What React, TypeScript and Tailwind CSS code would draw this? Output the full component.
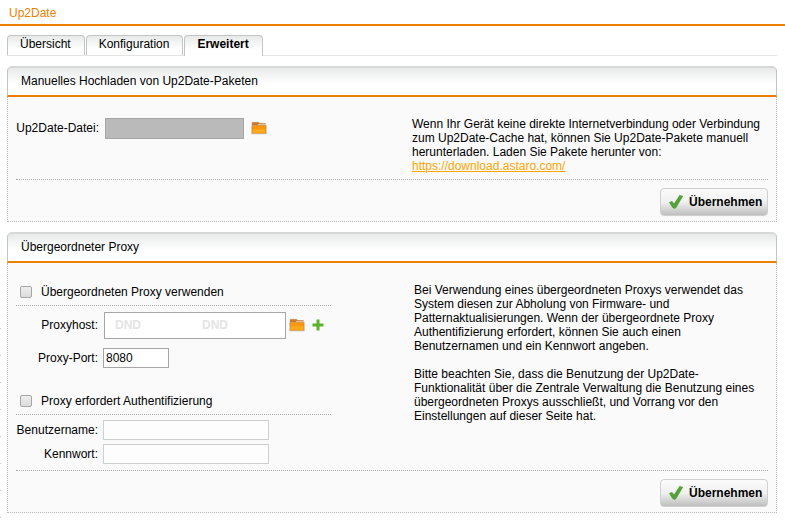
import { useState, type ReactNode } from 'react';

const inputClass = 'h-5 border px-0.5 outline-none';

function FolderIcon() {
  return (
    <svg width="17" height="14" viewBox="0 0 17 14" aria-hidden="true">
      <path d="M0.5 4V1.5L1.5 0.8H7.5L9 2H15V4Z" fill="#dcdce0" />
      <path d="M1 4V1.2H7.6L8.6 2.2H14.4V4Z" fill="#c9782c" />
      <path d="M7 3.4H14.6" stroke="#f3dcc0" strokeWidth="0.8" />
      <rect x="0" y="4" width="16" height="9.4" rx="0.5" fill="#dcdce0" />
      <rect x="0.8" y="4.2" width="14.4" height="8.4" fill="#de8a20" />
      <rect x="1.6" y="5" width="12.8" height="6.8" fill="#fb9810" />
      <rect x="1.6" y="8.4" width="12.8" height="3.4" fill="#fdab1c" />
    </svg>
  );
}

function PlusIcon() {
  return (
    <svg width="12" height="12" viewBox="0 0 12 12" aria-hidden="true">
      <path d="M4.5 0.5H7.5V4.5H11.5V7.5H7.5V11.5H4.5V7.5H0.5V4.5H4.5Z" fill="#5cb12e" />
    </svg>
  );
}

function CheckIcon() {
  return (
    <svg width="16" height="16" viewBox="0 0 16 16" aria-hidden="true">
      <path d="M1 8.2L4 7L6 9.4L11.6 1L15.2 2L8.4 13.4L6.6 15L4.2 13.4Z" fill="#56a13c" />
    </svg>
  );
}

function ApplyBar() {
  return (
    <div className="mt-1.5 flex justify-end border-t border-dotted border-[#a8a8a8] pt-2 pb-[5px]">
      <button
        type="button"
        className="flex h-7 w-[108px] items-center gap-[5px] rounded-[4px] border border-[#cfcfcf] bg-gradient-to-b from-[#fbfbfb] via-[#f0f0f0] to-[#bfbfbf] pl-[7px] font-bold whitespace-nowrap"
      >
        <CheckIcon />
        Übernehmen
      </button>
    </div>
  );
}

function Panel({ title, children }: { title: string; children: ReactNode }) {
  return (
    <section>
      <h2 className="flex h-[31px] items-center rounded-t-[5px] border-x border-y-2 border-x-[#c4c4c4] border-t-[#d8d8d8] border-b-[#ee8000] bg-gradient-to-b from-[#e8eaea] to-white to-60% pb-0.5 pl-[13px]">
        {title}
      </h2>
      <div className="border-x border-b border-dotted border-[#b8b8b8] bg-[#fafafa] px-2 pt-5">{children}</div>
    </section>
  );
}

interface CheckRowProps {
  label: string;
  checked: boolean;
  onChange: (checked: boolean) => void;
}

function CheckRow({ label, checked, onChange }: CheckRowProps) {
  return (
    <div className="border-b border-dotted border-[#a8a8a8] pb-1">
      <label className="flex h-[18px] items-center gap-[9px] pl-1">
        <input
          type="checkbox"
          checked={checked}
          onChange={(e) => onChange(e.target.checked)}
          className="size-3 appearance-none rounded-[2px] border border-[#a6a6a6] bg-gradient-to-b from-[#eeeeee] to-[#dcdcdc] checked:bg-[#ee8000] checked:bg-none"
        />
        {label}
      </label>
    </div>
  );
}

export default function App() {
  const [tab, setTab] = useState('Erweitert');
  const [useProxy, setUseProxy] = useState(false);
  const [useAuth, setUseAuth] = useState(false);
  const [port, setPort] = useState('8080');

  return (
    <div className="relative min-h-screen bg-white font-['Liberation_Sans',Arial,sans-serif] text-xs leading-[14px] text-black">
      {/* Row marks of the menu next to the page */}
      <div
        aria-hidden="true"
        className="absolute top-[328px] bottom-0 left-0 w-px bg-[repeating-linear-gradient(to_bottom,#c8c8c8_0_1px,transparent_1px_27px)]"
      />

      <h1 className="flex h-[26px] items-center border-b-2 border-[#ee8000] pt-0.5 pl-[9px] text-[#ee8000]">Up2Date</h1>

      {/* Tabs */}
      <nav className="mt-[9px] mr-2 ml-[7px] flex h-[21px] gap-px border-b border-[#e4e4e4]">
        {['Übersicht', 'Konfiguration', 'Erweitert'].map((name) => (
          <button
            key={name}
            type="button"
            onClick={() => setTab(name)}
            className={`rounded-t-[4px] border-x border-t border-[#c4c4c4] bg-gradient-to-b from-[#e8eaea] to-white to-70% pr-[13px] pl-3 ${
              name === tab ? '-mb-px pb-[5px] font-bold' : 'pb-1'
            }`}
          >
            {name}
          </button>
        ))}
      </nav>

      <main className="flex flex-col gap-2.5 pt-2.5 pr-2 pl-[7px]">
        <Panel title="Manuelles Hochladen von Up2Date-Paketen">
          <div className="flex">
            <div className="w-[396px] shrink-0">
              <div className="flex items-center gap-1.5 pt-px">
                <label htmlFor="file" className="w-[83px] pb-0.5 text-right">
                  Up2Date-Datei:
                </label>
                <input id="file" readOnly className="h-[21px] w-[139px] border border-[#a6a6a6] bg-[#bababa] outline-none" />
                <button type="button" aria-label="Datei wählen" className="pb-0.5 pl-px">
                  <FolderIcon />
                </button>
              </div>
            </div>
            <p className="flex-1">
              Wenn Ihr Gerät keine direkte Internetverbindung oder Verbindung zum Up2Date-Cache hat, können Sie
              Up2Date-Pakete manuell herunterladen. Laden Sie Pakete herunter von:{' '}
              <a href="https://download.astaro.com/" className="block text-[#ffa500] underline">
                https://download.astaro.com/
              </a>
            </p>
          </div>
          <ApplyBar />
        </Panel>

        <Panel title="Übergeordneter Proxy">
          <div className="flex">
            <div className="w-[398px] shrink-0">
              <div className="w-[315px]">
                <CheckRow label="Übergeordneten Proxy verwenden" checked={useProxy} onChange={setUseProxy} />
                <div className="mt-1.5 flex items-center gap-1.5">
                  <span className="w-[82px] pb-0.5 text-right">Proxyhost:</span>
                  <div className="flex h-[27px] w-[182px] items-center gap-[61px] border border-[#a6a6a6] bg-white pb-0.5 pl-2.5 font-bold text-[#e4e4e4]">
                    <span>DND</span>
                    <span>DND</span>
                  </div>
                  <div className="-ml-1 flex items-center gap-1.5 pb-0.5">
                    <button type="button" aria-label="Proxyhost wählen" className="pl-px">
                      <FolderIcon />
                    </button>
                    <button type="button" aria-label="Proxyhost hinzufügen">
                      <PlusIcon />
                    </button>
                  </div>
                </div>
                <div className="mt-[9px] flex items-center gap-[5px]">
                  <label htmlFor="port" className="w-[82px] text-right">
                    Proxy-Port:
                  </label>
                  <input
                    id="port"
                    value={port}
                    onChange={(e) => setPort(e.target.value)}
                    className={`${inputClass} w-[66px] border-[#a6a6a6] bg-white`}
                  />
                </div>

                <div className="mt-6">
                  <CheckRow label="Proxy erfordert Authentifizierung" checked={useAuth} onChange={setUseAuth} />
                </div>
                <div className="mt-[5px] flex flex-col gap-1">
                  <div className="flex items-center gap-[5px]">
                    <label htmlFor="user" className="w-[82px] text-right">
                      Benutzername:
                    </label>
                    <input id="user" disabled={!useAuth} className={`${inputClass} w-[166px] border-[#cfcfcf] bg-[#fdfdfd]`} />
                  </div>
                  <div className="flex items-center gap-[5px]">
                    <label htmlFor="password" className="w-[82px] text-right">
                      Kennwort:
                    </label>
                    <input
                      id="password"
                      type="password"
                      disabled={!useAuth}
                      className={`${inputClass} w-[166px] border-[#cfcfcf] bg-[#fdfdfd]`}
                    />
                  </div>
                </div>
              </div>
            </div>
            <div className="flex flex-1 flex-col gap-3.5 pr-3">
              <p>
                Bei Verwendung eines übergeordneten Proxys verwendet das System diesen zur Abholung von Firmware- und
                Patternaktualisierungen. Wenn der übergeordnete Proxy Authentifizierung erfordert, können Sie auch einen
                Benutzernamen und ein Kennwort angeben.
              </p>
              <p>
                Bitte beachten Sie, dass die Benutzung der Up2Date-Funktionalität über die Zentrale Verwaltung die
                Benutzung eines übergeordneten Proxys ausschließt, und Vorrang vor den Einstellungen auf dieser Seite hat.
              </p>
            </div>
          </div>
          <ApplyBar />
        </Panel>
      </main>
    </div>
  );
}
